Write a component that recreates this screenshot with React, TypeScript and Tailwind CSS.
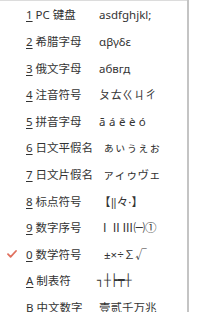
import React from 'react';

interface Item {
  key: string;
  label: string;
  sample: string;
  checked?: boolean;
  extra?: string;
}

const items: Item[] = [
  { key: '1', label: 'PC 键盘', sample: 'asdfghjkl;' },
  { key: '2', label: '希腊字母', sample: 'αβγδε' },
  { key: '3', label: '俄文字母', sample: 'абвгд' },
  { key: '4', label: '注音符号', sample: 'ㄆㄊㄍㄐㄔ' },
  { key: '5', label: '拼音字母', sample: 'āáěèó', extra: 'tracking-[3.5px]' },
  { key: '6', label: '日文平假名', sample: 'ぁぃぅぇぉ', extra: 'ml-[4px]' },
  { key: '7', label: '日文片假名', sample: 'ァィゥヴェ', extra: 'ml-[4px]' },
  { key: '8', label: '标点符号', sample: '【‖々·】' },
  { key: '9', label: '数字序号', sample: 'ⅠⅡⅢ㈠①' },
  { key: '0', label: '数学符号', sample: '±×÷∑√', checked: true, extra: 'ml-[5px]' },
  { key: 'A', label: '制表符', sample: '┐┼┝┯┼', extra: 'font-["DejaVu_Sans_Mono",monospace] -ml-[2px]' },
  { key: 'B', label: '中文数字', sample: '壹贰千万兆' },
];

const Check = () => (
  <svg width="10" height="8" viewBox="0 0 10 8" className="ml-[7px]">
    <path d="M1 4.2 L3.6 6.8 L9 1" fill="none" stroke="#e0705e" strokeWidth="1.8" strokeLinecap="round" strokeLinejoin="round" />
  </svg>
);

export default function App() {
  return (
    <div
      className="flex w-[215px] h-[312px] bg-white overflow-hidden text-[11.5px] text-[#333]"
      style={{ fontFamily: '"Noto Sans", "Noto Sans CJK SC", sans-serif' }}
    >
      <div className="w-[187px] border-t border-[#dcdcdc] pt-[0.7px] flex flex-col">
        {items.map((it) => (
          <div key={it.key} className="h-[26.6px] flex items-center shrink-0">
            <span className="w-[26px] flex items-center">{it.checked && <Check />}</span>
            <span className="w-[73px] whitespace-nowrap">
              <span className="underline underline-offset-2">{it.key}</span> {it.label}
            </span>
            <span className={`whitespace-nowrap ${it.extra ?? ''}`}>{it.sample}</span>
          </div>
        ))}
      </div>
      <div className="w-[2px] bg-[#c4c4c4]" />
      <div className="flex-1" />
    </div>
  );
}
